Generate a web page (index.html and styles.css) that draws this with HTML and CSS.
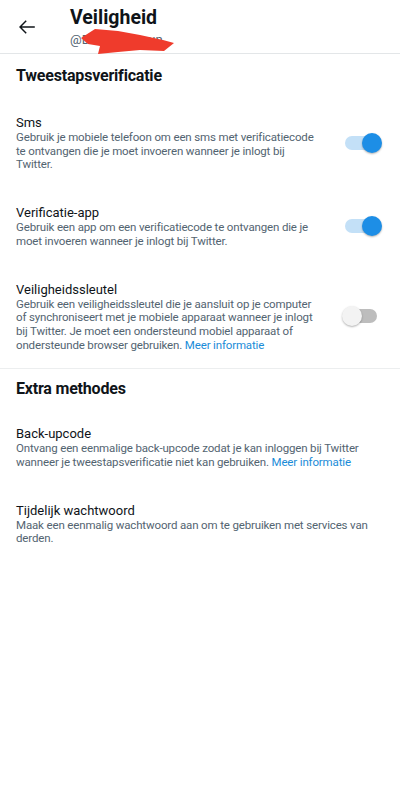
FILE: index.html
```html
<!DOCTYPE html>
<html lang="nl">
<head>
  <meta charset="UTF-8">
  <title>Veiligheid</title>
  <link rel="stylesheet" href="styles.css">
</head>
<body>

  <header class="topbar">
    <button class="back" aria-label="Terug">
      <svg width="22" height="22" viewBox="0 0 24 24"><path d="M20.5 11.2H6.3l5.4-5.4-1.13-1.13L3.3 12l7.27 7.330 1.13-1.13-5.4-5.4h14.2z" fill="#0f1419"/></svg>
    </button>
    <div class="titles">
      <h1>Veiligheid</h1>
      <div class="handle">@Dxxxxxxxxxun</div>
    </div>
    <svg class="redact" width="400" height="60" viewBox="0 0 400 60">
      <polygon points="81,38 95,29 118,31 140,35 163,40 174,43 164,51 140,50 118,52 98,54 100,46 88,44" fill="#ef3b2c"/>
    </svg>
  </header>

  <section class="group">
    <h2>Tweestapsverificatie</h2>

    <div class="row">
      <div class="text">
        <div class="label">Sms</div>
        <p class="desc">Gebruik je mobiele telefoon om een sms met verificatiecode te ontvangen die je moet invoeren wanneer je inlogt bij Twitter.</p>
      </div>
      <span class="switch on"><span class="knob"></span></span>
    </div>

    <div class="row">
      <div class="text">
        <div class="label">Verificatie-app</div>
        <p class="desc">Gebruik een app om een verificatiecode te ontvangen die je moet invoeren wanneer je inlogt bij Twitter.</p>
      </div>
      <span class="switch on"><span class="knob"></span></span>
    </div>

    <div class="row">
      <div class="text">
        <div class="label">Veiligheidssleutel</div>
        <p class="desc">Gebruik een veiligheidssleutel die je aansluit op je computer of synchroniseert met je mobiele apparaat wanneer je inlogt bij Twitter. Je moet een ondersteund mobiel apparaat of ondersteunde browser gebruiken. <a href="#">Meer informatie</a></p>
      </div>
      <span class="switch"><span class="knob"></span></span>
    </div>
  </section>

  <section class="group">
    <h2>Extra methodes</h2>

    <div class="row">
      <div class="text wide">
        <div class="label">Back-upcode</div>
        <p class="desc">Ontvang een eenmalige back-upcode zodat je kan inloggen bij Twitter wanneer je tweestapsverificatie niet kan gebruiken. <a href="#">Meer informatie</a></p>
      </div>
    </div>

    <div class="row">
      <div class="text wide">
        <div class="label">Tijdelijk wachtwoord</div>
        <p class="desc">Maak een eenmalig wachtwoord aan om te gebruiken met services van derden.</p>
      </div>
    </div>
  </section>

</body>
</html>
```

FILE: styles.css
```css
body {
  margin: 0;
  font-family: Roboto, "Liberation Sans", sans-serif;
  background-color: #fff;
  color: #0f1419;
}
.topbar {
  position: relative;
  display: flex;
  align-items: flex-start;
  height: 53px;
  border-bottom: 1px solid #e3e6e8;
}
.back {
  width: 54px;
  height: 53px;
  padding: 0 0 0 16px;
  border: none;
  background: none;
  display: flex;
  align-items: center;
}
.titles {
  padding-top: 6px;
  margin-left: 16px;
}
.titles h1 {
  margin: 0;
  font-size: 19.5px;
  line-height: 24px;
  font-weight: 700;
}
.handle {
  margin-top: 2px;
  font-size: 13px;
  line-height: 16px;
  color: #536471;
}
.redact {
  position: absolute;
  left: 0;
  top: 0;
}
.group {
  border-bottom: 1px solid #eceeef;
}
.group:last-child {
  border-bottom: none;
}
.group h2 {
  margin: 0;
  padding: 12px 16px;
  font-size: 16px;
  line-height: 20px;
  font-weight: 700;
  letter-spacing: -0.2px;
}
.group + .group h2 {
  padding: 10px 16px;
}
.row {
  display: flex;
  align-items: center;
  gap: 16px;
  padding: 16px 18px 16px 16px;
}
.text {
  width: 305px;
  margin-right: 5px;
}
.text.wide {
  width: auto;
  flex: 1;
  margin-right: 0;
}
.label {
  font-size: 13px;
  line-height: 16px;
  padding-top: 1px;
}
.desc {
  margin: 0;
  font-size: 11.5px;
  line-height: 13.7px;
  letter-spacing: -0.15px;
  color: #536471;
}
.desc a {
  color: #1a8cd8;
  text-decoration: none;
}
.switch {
  position: relative;
  width: 40px;
  height: 20px;
  flex-shrink: 0;
}
.switch::before {
  content: "";
  position: absolute;
  left: 3px;
  right: 5px;
  top: 3px;
  height: 14px;
  border-radius: 7px;
  background-color: #bdbdbd;
}
.switch.on::before {
  background-color: #c3e0f7;
}
.knob {
  position: absolute;
  left: 0;
  top: 0;
  width: 20px;
  height: 20px;
  border-radius: 50%;
  background-color: #f3f3f3;
  box-shadow: 0 1px 2px rgba(0,0,0,0.3);
}
.switch.on .knob {
  left: 20px;
  background-color: #1d8ee6;
}
```
